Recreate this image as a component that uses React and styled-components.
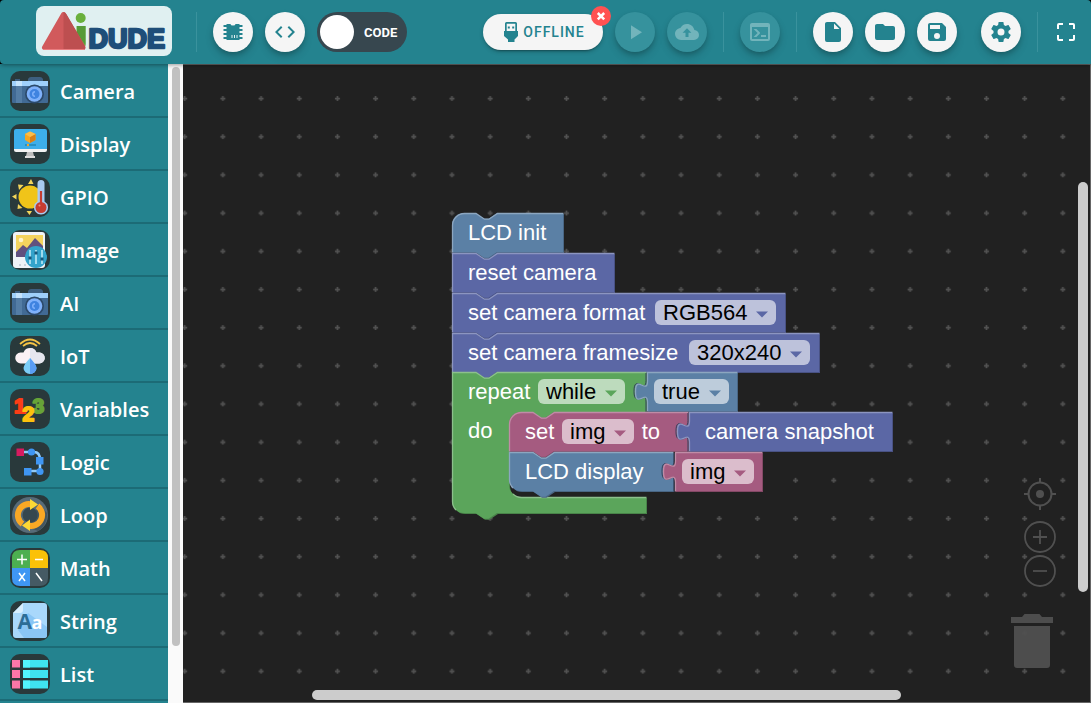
import React, { useState } from "react";
import styled, { createGlobalStyle, css } from "styled-components";

const teal = "#24838f";
const slate = "#5b80a5";
const indigo = "#5b67a5";
const green = "#5ba55b";
const plum = "#a55b80";

const GlobalStyle = createGlobalStyle`
  * { box-sizing: border-box; }
  html, body, #root { height: 100%; margin: 0; }
  body { background: #000; font-family: Roboto, "Liberation Sans", sans-serif; overflow: hidden; }
  button, select { font: inherit; margin: 0; }
`;

const Page = styled.div`
  display: flex;
  flex-direction: column;
  height: 100vh;
  min-height: 0;
`;

/* ---------- header ---------- */

const Header = styled.header`
  display: flex;
  align-items: center;
  flex: none;
  height: 64px;
  padding: 0 13px 0 36px;
  background: ${teal};
  border-radius: 4px 4px 0 4px;
  box-shadow: 0 1px 4px rgba(0, 0, 0, 0.4);
  z-index: 2;
`;

const LogoLink = styled.a`
  display: block;
  width: 136px;
  height: 50px;
  margin-bottom: 2px;
  border-radius: 8px;
  background: #e0f0f1;
  svg { display: block; }
`;

const Group = styled.div`
  display: flex;
  align-items: center;
  gap: 12px;
`;

const Spacer = styled.div`
  flex: 1;
`;

const Divider = styled.span`
  width: 1px;
  height: 40px;
  margin: 0 ${(p) => p.$right ?? 16}px 0 ${(p) => p.$left ?? 16}px;
  background: #3a929d;
`;

const RoundButton = styled.button`
  display: flex;
  align-items: center;
  justify-content: center;
  width: 40px;
  height: 40px;
  padding: 0;
  border: 0;
  border-radius: 50%;
  background: #f5f5f5;
  color: ${teal};
  box-shadow: 0 3px 5px -1px rgba(0, 0, 0, 0.2), 0 5px 8px rgba(0, 0, 0, 0.14);
  &:disabled {
    background: #36929d;
    color: #72b4bb;
  }
  ${(p) => p.$spaced && css`margin-left: 12px;`}
`;

const PlainButton = styled.button`
  display: flex;
  align-items: center;
  justify-content: center;
  width: 24px;
  height: 40px;
  padding: 0;
  border: 0;
  background: none;
  color: #fff;
`;

const ModeSwitch = styled.label`
  display: flex;
  align-items: center;
  gap: 10px;
  width: 90px;
  height: 40px;
  padding: 0 3px;
  border-radius: 20px;
  background: #37474f;
  color: #fff;
  font-size: 13px;
  font-weight: 700;
`;

const ModeInput = styled.input`
  appearance: none;
  width: 34px;
  height: 34px;
  margin: 0;
  border-radius: 50%;
  background: #fff;
`;

const ConnectButton = styled.button`
  position: relative;
  display: flex;
  align-items: center;
  justify-content: center;
  gap: 4px;
  width: 120px;
  height: 36px;
  padding: 0 12px 0 14px;
  border: 0;
  border-radius: 18px;
  background: #f5f5f5;
  color: ${teal};
  font-size: 14px;
  font-weight: 500;
  letter-spacing: 1px;
  box-shadow: 0 3px 2px -2px rgba(0, 0, 0, 0.3), 0 2px 4px rgba(0, 0, 0, 0.2);
`;

const Badge = styled.span`
  position: absolute;
  top: -8px;
  right: -8px;
  display: flex;
  width: 20px;
  height: 20px;
  border-radius: 50%;
  background: #ff5252;
`;

const Icon = ({ d, size = 24 }) => (
  <svg width={size} height={size} viewBox="0 0 24 24" fill="currentColor" aria-hidden="true">
    <path d={d} />
  </svg>
);

const icons = {
  play: "M8,5.14V19.14L19,12.14L8,5.14Z",
  upload:
    "M13.500,12.8V17H10.500V12.8H7.6L12,8.2L16.4,12.8M19.35,10.03C18.67,6.59 15.64,4 12,4C9.11,4 6.6,5.64 5.35,8.03C2.34,8.36 0,10.9 0,14A6,6 0 0,0 6,20H19A5,5 0 0,0 24,15C24,12.36 21.95,10.22 19.35,10.03Z",
  console:
    "M20,19V7H4V19H20M20,3A2,2 0 0,1 22,5V19A2,2 0 0,1 20,21H4A2,2 0 0,1 2,19V5C2,3.89 2.9,3 4,3H20M13,17V15H18V17H13M9.58,13L5.57,9H8.4L11.7,12.3C12.09,12.69 12.09,13.33 11.7,13.72L8.42,17H5.59L9.58,13Z",
  code: "M14.6,16.6L19.2,12L14.6,7.4L16,6L22,12L16,18L14.6,16.6M9.4,16.6L4.8,12L9.4,7.4L8,6L2,12L8,18L9.4,16.6Z",
  file: "M13,9V3.5L18.5,9M6,2C4.89,2 4,2.89 4,4V20A2,2 0 0,0 6,22H18A2,2 0 0,0 20,20V8L14,2H6Z",
  folder:
    "M10,4H4C2.89,4 2,4.89 2,6V18A2,2 0 0,0 4,20H20A2,2 0 0,0 22,18V8C22,6.89 21.1,6 20,6H12L10,4Z",
  save: "M15,9H5V5H15M12,19A3,3 0 0,1 9,16A3,3 0 0,1 12,13A3,3 0 0,1 15,16A3,3 0 0,1 12,19M17,3H5C3.89,3 3,3.9 3,5V19A2,2 0 0,0 5,21H19A2,2 0 0,0 21,19V7L17,3Z",
  cog: "M12,15.5A3.5,3.5 0 0,1 8.5,12A3.5,3.5 0 0,1 12,8.5A3.5,3.5 0 0,1 15.5,12A3.5,3.5 0 0,1 12,15.5M19.43,12.97C19.47,12.65 19.5,12.33 19.5,12C19.5,11.67 19.47,11.34 19.43,11L21.54,9.37C21.73,9.22 21.78,8.95 21.66,8.73L19.66,5.27C19.54,5.05 19.27,4.96 19.05,5.05L16.56,6.05C16.04,5.66 15.5,5.32 14.87,5.07L14.5,2.42C14.46,2.18 14.25,2 14,2H10C9.75,2 9.54,2.18 9.5,2.42L9.13,5.07C8.5,5.32 7.96,5.66 7.44,6.05L4.95,5.05C4.73,4.96 4.46,5.05 4.34,5.27L2.34,8.73C2.21,8.95 2.27,9.22 2.46,9.37L4.57,11C4.53,11.34 4.5,11.67 4.5,12C4.5,12.33 4.53,12.65 4.57,12.97L2.46,14.63C2.27,14.78 2.21,15.05 2.34,15.27L4.34,18.73C4.46,18.95 4.73,19.03 4.95,18.95L7.44,17.94C7.96,18.34 8.5,18.68 9.13,18.93L9.5,21.58C9.54,21.82 9.75,22 10,22H14C14.25,22 14.46,21.82 14.5,21.58L14.87,18.93C15.5,18.67 16.04,18.34 16.56,17.94L19.05,18.95C19.27,19.03 19.54,18.95 19.66,18.73L21.66,15.27C21.78,15.05 21.73,14.78 21.54,14.63L19.43,12.97Z",
};

const Logo = () => (
  <svg width="136" height="50" viewBox="0 0 136 50" role="img" aria-label="AiDUDE">
    <rect x="40.500" y="20" width="9" height="20" fill="#69b03c" />
    <path d="M41 28 L49.500 39 V20 H41Z" fill="#569a38" />
    <circle cx="44.700" cy="12" r="5" fill="#69b03c" />
    <path d="M27.500 8.500 L8.500 41.500 H47 Z" fill="#d15a5c" stroke="#d15a5c" strokeWidth="5" strokeLinejoin="round" />
    <path d="M27.500 6 Q29.500 6.300 30.500 8.300 L49 40 Q50 43.500 47 44 H27.500Z" fill="#bd4f50" />
    <path d="M7 43.500 H48" stroke="#ea7d80" />
    <text x="52.500" y="42" fontFamily="Liberation Sans, sans-serif" fontWeight="700" fontSize="27" fill="#1f4e79" stroke="#1f4e79" strokeWidth="2.500" strokeLinejoin="round">
      DUDE
    </text>
  </svg>
);

const ChipIcon = () => (
  <svg width="20" height="20" viewBox="0 0 20 20" fill="currentColor" aria-hidden="true">
    <path d="M3.500 2H7.500A2.500 1.500 0 0 0 12.500 2H16.500V18H3.500Z" />
    <path d="M.5 3H4V5H.5ZM.5 7H4V9H.5ZM.5 11H4V13H.5ZM.5 15H4V17H.5ZM16 3H19.500V5H16ZM16 7H19.500V9H16ZM16 11H19.500V13H16ZM16 15H19.500V17H16Z" />
    <path d="M8.500 13H9.500V16H8.500ZM11 13H12V16H11ZM13.500 13H14.500V16H13.500Z" fill="#e6f1f2" />
  </svg>
);

const UsbIcon = () => (
  <svg width="16" height="20" viewBox="0 0 16 20" fill="currentColor" aria-hidden="true">
    <path fillRule="evenodd" d="M3.500 0H12.500A1.500 1.500 0 0 1 14 1.500V9H15V14L11.500 17.500V20H5V17.500L1 14V9H2V1.500A1.500 1.500 0 0 1 3.500 0ZM3.700 1.700V9H12.300V1.700ZM4.800 4.500H6.800V6.500H4.800ZM9.200 4.500H11.200V6.500H9.200Z" />
  </svg>
);

const FullscreenIcon = () => (
  <svg width="18" height="18" viewBox="0 0 18 18" fill="none" stroke="currentColor" strokeWidth="2" aria-hidden="true">
    <path d="M1 6V2Q1 1 2 1H6M12 1H16Q17 1 17 2V6M17 12V16Q17 17 16 17H12M6 17H2Q1 17 1 16V12" />
  </svg>
);

/* ---------- toolbox ---------- */

const Main = styled.main`
  display: flex;
  flex: 1;
  min-height: 0;
  background: ${teal};
`;

const Toolbox = styled.nav`
  flex: none;
  width: 168px;
  padding-top: 1px;
  overflow: hidden;
`;

const Category = styled.button`
  display: flex;
  align-items: center;
  gap: 10px;
  width: 100%;
  height: 53px;
  padding: 1px 10px 0;
  border: 0;
  border-bottom: 2px solid #1c6b76;
  background: none;
  color: #fff;
  font-family: "Open Sans", Lato, sans-serif;
  font-size: 20px;
  font-weight: 600;
  text-align: left;
`;

const Tile = styled.svg`
  flex: none;
  width: 40px;
  height: 40px;
  border-radius: 10px;
  background: #29393b;
`;

const ScrollTrack = styled.div`
  flex: none;
  width: 15px;
  padding: 3px 3px 0 4px;
  background: #fafafa;
`;

const ScrollThumb = styled.div`
  height: 91%;
  border-radius: 4px;
  background: #c1c1c1;
`;

const CameraArt = () => (
  <>
    <path d="M5 8H10V11H5ZM18 8Q19 6 21 6H30Q32 6 33 8V11H18Z" fill="#3d5f80" />
    <path d="M2 14H38V31Q38 32 37 32H3Q2 32 2 31Z" fill="#416a94" />
    <path d="M6 14H12V32H6Z" fill="#547da5" />
    <path d="M2 10H38V15H2Z" fill="#9fd0fb" />
    <path d="M6 10H12V15H6Z" fill="#c5e4fd" />
    <circle cx="24.500" cy="23" r="9.500" fill="#2c4a6b" />
    <circle cx="24.500" cy="23" r="7.800" fill="#7fb1fa" />
    <circle cx="24.500" cy="23" r="5" fill="#3f83e0" />
    <path d="M25 20A3 3 0 0 0 25 26V24.500A1.500 1.500 0 0 1 25 21.500Z" fill="#7fb1fa" />
  </>
);

const art = {
  Camera: <CameraArt />,
  AI: <CameraArt />,
  Display: (
    <>
      <path d="M4 7Q4 5 6 5H35Q37 5 37 7V25H4Z" fill="#3daeea" />
      <path d="M4 25H37V26Q37 28 35 28H6Q4 28 4 26Z" fill="#f2f2f2" />
      <path d="M17 28H23L24 32H16Z" fill="#bdbdbd" />
      <path d="M15 32H25V34H15Z" fill="#dcdcdc" />
      <path d="M20 7.500L25.500 10V16L20 19L15 16V10Z" fill="#f5a623" />
      <path d="M20 13L25.500 10V16L20 19Z" fill="#d97f16" />
      <path d="M20 7.500L25.500 10L20 13L15 10Z" fill="#fbbd4a" />
      <path d="M15 21H26" stroke="#1f87b8" strokeWidth="1.500" />
      <circle cx="18" cy="21" r="1.200" fill="#f5a623" />
    </>
  ),
  GPIO: (
    <>
      <circle cx="20" cy="20" r="11.500" fill="#f0c419" />
      <path d="M18 7L21 2L23.500 7ZM8 7.500L13.500 8L9 13ZM2 19.500L6.500 17V22.500ZM7.500 32L8 27L12.500 31ZM16.500 34L22 34L19.500 38Z" fill="#f3d55b" />
      <path d="M27.500 6.500A3.500 3.500 0 0 1 34.500 6.500V24.500A7 7 0 1 1 27.500 24.500Z" fill="#a9caf0" />
      <path d="M31 14V30" stroke="#c63c31" strokeWidth="2.200" />
      <circle cx="31" cy="30.500" r="5.500" fill="#c63c31" />
      <circle cx="29.500" cy="28.500" r="1" fill="#f08b80" />
    </>
  ),
  Image: (
    <>
      <rect x="3" y="2" width="32" height="36" rx="3" fill="#f0f3f7" />
      <path d="M6 5H33V26H6Z" fill="#f4d35e" />
      <circle cx="11" cy="10" r="2.300" fill="#fff3c9" />
      <path d="M6 22L13 15L17 18L25 8L33 16V27H6Z" fill="#61507e" />
      <path d="M9 35H11M14 35H16" stroke="#a9b4c0" />
      <circle cx="26" cy="27" r="11" fill="#33a3cb" />
      <path d="M20 20V34M26 20V34M32 20V34" stroke="#c6edf9" strokeWidth="1.500" />
      <path d="M18.500 28H21.500M24.500 23H27.500M30.500 29H33.500" stroke="#17577b" strokeWidth="3" />
    </>
  ),
  IoT: (
    <>
      <path d="M10 8Q20 -1 30 8M13 10Q20 4 27 10" fill="none" stroke="#f5c344" strokeWidth="1.700" />
      <path d="M11 27.500A5.500 5.500 0 0 1 10.500 16.500H13.500A7 7 0 0 1 26.500 16.500H29.500A5.500 5.500 0 0 1 29 27.500Z" fill="#fbf1f4" />
      <path d="M20 12A7 7 0 0 1 26.500 16.500H29.500A5.500 5.500 0 0 1 29 27.500H20Z" fill="#e6e6ef" />
      <path d="M20 22Q13.500 29 13.500 32A6.500 6 0 0 0 26.500 32Q26.500 29 20 22Z" fill="#7ccdf7" />
      <path d="M20 22Q26.500 29 26.500 32A6.500 6 0 0 1 20 38Z" fill="#5a9df5" />
    </>
  ),
  Variables: (
    <g fontFamily="Liberation Sans, sans-serif" fontWeight="700" fontSize="21" strokeWidth="2" strokeLinejoin="round">
      <text x="22.500" y="24" fill="#67a338" stroke="#67a338">3</text>
      <text x="4" y="23.500" fill="#fb3d16" stroke="#fb3d16">1</text>
      <text x="12.500" y="32" fill="#fdc10d" stroke="#fdc10d">2</text>
    </g>
  ),
  Logic: (
    <>
      <path d="M12 10H24Q30 10 30 18V29H18" fill="none" stroke="#90caf9" strokeWidth="2.500" />
      <path d="M6.500 6.500H14V14H6.500Z" fill="#d81b60" />
      <circle cx="21.500" cy="10" r="3.600" fill="#3f96f3" />
      <path d="M26 15H33.500V22.500H26ZM14 26H21.500V33.500H14Z" fill="#3f96f3" />
      <circle cx="30" cy="29.500" r="3.600" fill="#3f96f3" />
    </>
  ),
  Loop: (
    <>
      <circle cx="20" cy="20" r="18" fill="#576b78" />
      <path d="M30 10L37 18Q38 30 28 36L14 31Z" fill="#43555f" />
      <circle cx="20" cy="20" r="7.500" fill="#37474f" />
      <path d="M12.500 29A11 11 0 0 1 22 9.500M27.500 11A11 11 0 0 1 18 30.500" fill="none" stroke="#f9a825" strokeWidth="6" />
      <path d="M20 4L28 9.500L20 15ZM20 24.500L12 30.500L20 36Z" fill="#fdd835" />
    </>
  ),
  Math: (
    <>
      <path d="M2 20V10Q2 2 10 2H20V20Z" fill="#4caf50" />
      <path d="M20 2H30Q38 2 38 10V20H20Z" fill="#fbc108" />
      <path d="M2 20H20V38H10Q2 38 2 30Z" fill="#3f96f3" />
      <path d="M20 20H38V30Q38 38 30 38H20Z" fill="#455a64" />
      <path d="M7 11.500H17M12 6.500V16.500M25 11.500H33M9 25L15 33M15 25L9 33M26 25L32 33" stroke="#fff" strokeWidth="1.500" />
    </>
  ),
  String: (
    <>
      <path d="M13 2H34Q37 2 37 5V34Q37 37 34 37H6Q3 37 3 34V12Z" fill="#a9d8fb" />
      <path d="M18 12L37 26V34Q37 37 34 37H14L8 29Z" fill="#8ac6f5" />
      <path d="M13 2V9Q13 12 10 12H3Z" fill="#d7eefe" />
      <g fontFamily="Open Sans, sans-serif" fontWeight="700">
        <text x="7.500" y="28" fontSize="21" fill="#2d6d96">A</text>
        <text x="21.500" y="28" fontSize="18" fill="#fff">a</text>
      </g>
    </>
  ),
  List: (
    <>
      <path d="M2 6H10V13.500H2ZM2 16H10V24H2ZM2 26.500H10V34.500H2Z" fill="#fb76a8" />
      <path d="M13 6H38V13.500H13ZM13 16H38V24H13ZM13 26.500H38V34.500H13Z" fill="#3fe3f0" />
      <path d="M13 6H20V13.500H13ZM13 16H20V24H13ZM13 26.500H20V34.500H13Z" fill="#52f6ff" />
    </>
  ),
};

const categories = ["Camera", "Display", "GPIO", "Image", "AI", "IoT", "Variables", "Logic", "Loop", "Math", "String", "List"];

/* ---------- workspace ---------- */

const Workspace = styled.section`
  position: relative;
  flex: 1;
  min-width: 0;
  overflow: hidden;
  border: 1px solid #666;
  border-left: 0;
  background: #212121;
`;

const GridLayer = styled.svg`
  display: block;
  width: 100%;
  height: 100%;
`;

const Program = styled.div`
  position: absolute;
  left: 269px;
  top: 148px;
  color: #fff;
  font-family: "Liberation Sans", Arial, sans-serif;
  font-size: 22px;
  line-height: 40px;
`;

const BlockBox = styled.div`
  position: absolute;
  left: ${(p) => p.$x}px;
  top: ${(p) => p.$y}px;
  width: ${(p) => p.$w}px;
  white-space: nowrap;
`;

const BlockShape = styled.svg`
  position: absolute;
  inset: 0;
  overflow: visible;
`;

const BlockRow = styled.div`
  position: relative;
  display: flex;
  align-items: center;
  justify-content: space-between;
  height: 39px;
  padding: 0 ${(p) => p.$end ?? 9}px 0 ${(p) => p.$start ?? 16}px;
`;

const Field = styled.span`
  position: relative;
  display: flex;
  align-items: center;
  width: ${(p) => p.$w}px;
  height: 25px;
  border-radius: 6px;
  background: rgba(255, 255, 255, 0.6);
  svg {
    position: absolute;
    right: 8px;
    top: 11px;
    pointer-events: none;
  }
`;

const FieldSelect = styled.select`
  appearance: none;
  width: 100%;
  height: 25px;
  padding: 0 0 0 8px;
  border: 0;
  background: none;
  color: #000;
  line-height: 25px;
`;

const Dropdown = ({ value, label, width, color }) => (
  <Field $w={width}>
    <FieldSelect aria-label={label} defaultValue={value}>
      <option>{value}</option>
    </FieldSelect>
    <svg width="12" height="7" viewBox="0 0 12 7" fill={color}>
      <path d="M0 .5H12L6 6.500Z" />
    </svg>
  </Field>
);

const notch = "l8.500 5.700h4.500l8.500 -5.700";
const notchBack = "l-8.500 5.700h-4.500l-8.500 -5.700";
const tab = "c0 -14.400 -12 7 -12 -10.800s12 3.600 12 -10.800";

function outline({ kind, w, capTop, capBottom, h = 39 }) {
  if (kind === "value") {
    return { fill: `M0 0H${w}V${h}H0V30${tab}Z`, light: `M0 ${h}V30${tab}V0H${w}` };
  }
  if (kind === "loop") {
    return {
      fill: `M0 0H23.500${notch}H${w}V40H102${notchBack}H69A12 12 0 0 0 57 52V113A12 12 0 0 0 69 125H${w}V141H45${notchBack}H12A12 12 0 0 1 0 129Z`,
      light: `M3.500 137.500A12 12 0 0 1 0 129V0H23.500${notch}H${w}M60.500 121.500A12 12 0 0 0 69 125H${w}`,
    };
  }
  const start = capTop ? "M0 12A12 12 0 0 1 12 0" : "M0 0";
  const end = capBottom ? `H12A12 12 0 0 1 0 ${h - 12}` : "H0";
  const low = capBottom ? `M3.500 ${h - 3.5}A12 12 0 0 1 0 ${h - 12}V` : `M0 ${h}V`;
  return {
    fill: `${start}H23.500${notch}H${w}V${h}H45${notchBack}${end}Z`,
    light: `${low}${capTop ? "12A12 12 0 0 1 12 0" : "0"}H23.500${notch}H${w}`,
  };
}

const tones = {
  [slate]: ["#8ca6c0", "#496684"],
  [indigo]: ["#8c95c0", "#495284"],
  [green]: ["#8cc08c", "#498449"],
  [plum]: ["#c08ca6", "#844966"],
};

function Block({ x, y, w, color, kind, capTop, capBottom, children }) {
  const { fill, light } = outline({ kind, w, capTop, capBottom });
  const [lightTone, darkTone] = tones[color];
  return (
    <BlockBox $x={x} $y={y} $w={w}>
      <BlockShape width={w} height="40">
        {kind === "value" && <path d={`M-1 40V30${tab}V1`} fill="none" stroke="#34415a" strokeWidth="1" />}
        <path d={fill} fill={darkTone} transform="translate(1 1)" />
        <path d={fill} fill={color} />
        <path d={light} fill="none" stroke={lightTone} strokeWidth="1.300" transform="translate(.5 .5)" />
      </BlockShape>
      {children}
    </BlockBox>
  );
}

const Bar = styled.div`
  position: absolute;
  border-radius: 5px;
  background: #ccc;
  ${(p) =>
    p.$vertical
      ? css`right: 2px; top: 117px; width: 10px; height: 410px;`
      : css`left: 129px; right: 189px; bottom: 2px; height: 10px;`}
`;

const ZoomControls = styled.div`
  position: absolute;
  right: 34px;
  bottom: 115px;
  display: flex;
  flex-direction: column;
  gap: 2px;
`;

const CanvasButton = styled.button`
  display: block;
  padding: 0;
  border: 0;
  background: none;
  color: #505050;
  svg { display: block; }
  ${(p) => p.$apart && css`margin-bottom: 9px;`}
`;

const Trash = styled(CanvasButton)`
  position: absolute;
  right: 37px;
  bottom: 34px;
`;

export default function App() {
  const [code, setCode] = useState(false);
  return (
    <Page>
      <GlobalStyle />
      <Header>
        <LogoLink href="#home"><Logo /></LogoLink>
        <Divider $left={24} $right={16} />
        <Group>
          <RoundButton aria-label="Board"><ChipIcon /></RoundButton>
          <RoundButton aria-label="Examples"><Icon d={icons.code} /></RoundButton>
          <ModeSwitch>
            <ModeInput type="checkbox" role="switch" checked={code} onChange={() => setCode(!code)} />
            CODE
          </ModeSwitch>
        </Group>
        <Spacer />
        <Group>
          <ConnectButton>
            <UsbIcon />
            OFFLINE
            <Badge>
              <svg width="20" height="20" viewBox="0 0 20 20" stroke="#fff" strokeWidth="2.500">
                <path d="M6.800 7L13.200 13.400M13.200 7L6.800 13.400" />
              </svg>
            </Badge>
          </ConnectButton>
          <RoundButton disabled aria-label="Run"><Icon d={icons.play} /></RoundButton>
          <RoundButton disabled aria-label="Upload"><Icon d={icons.upload} /></RoundButton>
        </Group>
        <Divider />
        <RoundButton disabled aria-label="Terminal"><Icon d={icons.console} /></RoundButton>
        <Divider />
        <Group>
          <RoundButton aria-label="New file"><Icon d={icons.file} /></RoundButton>
          <RoundButton aria-label="Open"><Icon d={icons.folder} /></RoundButton>
          <RoundButton aria-label="Save"><Icon d={icons.save} /></RoundButton>
          <RoundButton $spaced aria-label="Settings"><Icon d={icons.cog} /></RoundButton>
        </Group>
        <Divider />
        <PlainButton aria-label="Fullscreen"><FullscreenIcon /></PlainButton>
      </Header>

      <Main>
        <Toolbox aria-label="Blocks">
          {categories.map((name) => (
            <Category key={name}>
              <Tile viewBox="0 0 40 40" aria-hidden="true">{art[name]}</Tile>
              {name}
            </Category>
          ))}
        </Toolbox>
        <ScrollTrack><ScrollThumb /></ScrollTrack>

        <Workspace>
          <GridLayer aria-hidden="true">
            <defs>
              <pattern id="grid" x="-17.400" y="14.400" width="38.180" height="38.180" patternUnits="userSpaceOnUse">
                <path d="M16.600 19.100H21.600M19.100 16.600V21.600" stroke="#525252" strokeWidth="1.700" />
              </pattern>
            </defs>
            <rect width="100%" height="100%" fill="url(#grid)" />
          </GridLayer>

          <Program>
            <Block x={0} y={0} w={111} color={slate} capTop>
              <BlockRow>LCD init</BlockRow>
            </Block>
            <Block x={0} y={40} w={162} color={indigo}>
              <BlockRow>reset camera</BlockRow>
            </Block>
            <Block x={0} y={80} w={333} color={indigo}>
              <BlockRow>
                set camera format
                <Dropdown label="Format" value="RGB564" width={121} color={indigo} />
              </BlockRow>
            </Block>
            <Block x={0} y={120} w={367} color={indigo}>
              <BlockRow>
                set camera framesize
                <Dropdown label="Frame size" value="320x240" width={121} color={indigo} />
              </BlockRow>
            </Block>
            <Block x={0} y={159} w={194} color={green} kind="loop">
              <BlockRow $end={21}>
                repeat
                <Dropdown label="Loop mode" value="while" width={87} color={green} />
              </BlockRow>
              <BlockRow>do</BlockRow>
            </Block>
            <Block x={195} y={159} w={90} color={slate} kind="value">
              <BlockRow $start={7} $end={8}>
                <Dropdown label="Condition" value="true" width={75} color={slate} />
              </BlockRow>
            </Block>
            <Block x={57} y={199} w={179} color={plum} capTop>
              <BlockRow $end={28}>
                set
                <Dropdown label="Variable" value="img" width={72} color={plum} />
                to
              </BlockRow>
            </Block>
            <Block x={57} y={239} w={164} color={slate} capBottom>
              <BlockRow>LCD display</BlockRow>
            </Block>
            <Block x={237} y={199} w={203} color={indigo} kind="value">
              <BlockRow>camera snapshot</BlockRow>
            </Block>
            <Block x={223} y={239} w={87} color={plum} kind="value">
              <BlockRow $start={7} $end={8}>
                <Dropdown label="Image" value="img" width={72} color={plum} />
              </BlockRow>
            </Block>
          </Program>

          <ZoomControls>
            <CanvasButton $apart aria-label="Center">
              <svg width="32" height="32" viewBox="0 0 32 32" fill="none" stroke="currentColor" strokeWidth="2">
                <circle cx="16" cy="16" r="11.500" />
                <path d="M16 0V5M16 27V32M0 16H5M27 16H32" />
                <circle cx="16" cy="16" r="4" fill="currentColor" stroke="none" />
              </svg>
            </CanvasButton>
            <CanvasButton aria-label="Zoom in">
              <svg width="32" height="32" viewBox="0 0 32 32" fill="none" stroke="currentColor" strokeWidth="1.800">
                <circle cx="16" cy="16" r="15" />
                <path d="M9 16H23M16 9V23" />
              </svg>
            </CanvasButton>
            <CanvasButton aria-label="Zoom out">
              <svg width="32" height="32" viewBox="0 0 32 32" fill="none" stroke="currentColor" strokeWidth="1.800">
                <circle cx="16" cy="16" r="15" />
                <path d="M9 16H23" />
              </svg>
            </CanvasButton>
          </ZoomControls>
          <Trash aria-label="Delete">
            <svg width="42" height="54" viewBox="0 0 42 54" fill="currentColor" opacity=".95">
              <path d="M0 3H11L13.500 0H28.500L31 3H42V9H0ZM3 12H39V51Q39 54 36 54H6Q3 54 3 51Z" />
            </svg>
          </Trash>
          <Bar $vertical />
          <Bar />
        </Workspace>
      </Main>
    </Page>
  );
}
